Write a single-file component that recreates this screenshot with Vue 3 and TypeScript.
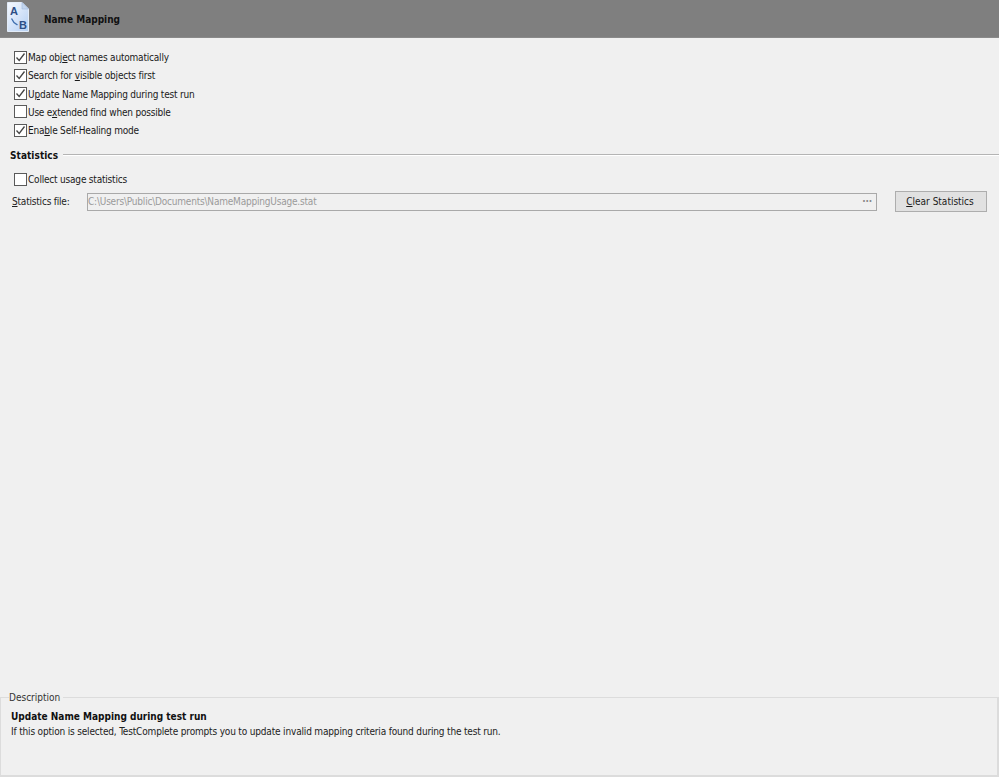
<script setup lang="ts">
interface Option { before: string; key: string; after: string; checked: boolean }
const options: Option[] = [
  { before: 'Map obj', key: 'e', after: 'ct names automatically', checked: true },
  { before: 'Search for ', key: 'v', after: 'isible objects first', checked: true },
  { before: 'U', key: 'p', after: 'date Name Mapping during test run', checked: true },
  { before: 'Use e', key: 'x', after: 'tended find when possible', checked: false },
  { before: 'Ena', key: 'b', after: 'le Self-Healing mode', checked: true },
]
</script>

<template>
  <div class="page">
    <header class="head">
      <svg class="logo" width="24" height="32" viewBox="0 0 24 32">
        <defs>
          <linearGradient id="pg" x1="0" y1="0" x2="1" y2="1">
            <stop offset="0" stop-color="#f6f9ff" />
            <stop offset="1" stop-color="#b4cff3" />
          </linearGradient>
        </defs>
        <path d="M1.5 1.5H16L22.5 8V30.5H1.5Z" fill="url(#pg)" stroke="#e3ecf8" />
        <path d="M16 1.5V8H22.5Z" fill="#c3d6ef" stroke="#9db9de" stroke-width="0.6" />
        <path d="M5.5 17.5L8 21.5L11.5 24" fill="none" stroke="#3f6fae" stroke-width="1.4" />
        <text x="4" y="14" class="logo-t">A</text>
        <text x="13" y="28" class="logo-t">B</text>
      </svg>
      <span class="title">Name Mapping</span>
    </header>

    <section class="options">
      <div v-for="o in options" :key="o.before" class="check-row">
        <span class="box">
          <svg v-if="o.checked" width="11" height="11" viewBox="0 0 11 11">
            <path d="M1.5 5.5L4.2 8.5L9.5 1.5" fill="none" stroke="#444" stroke-width="1.3" />
          </svg>
        </span>
        <span class="label">{{ o.before }}<u>{{ o.key }}</u>{{ o.after }}</span>
      </div>
    </section>

    <div class="group">
      <span class="group-title">Statistics</span>
      <span class="group-line"></span>
    </div>

    <div class="check-row collect">
      <span class="box"></span>
      <span class="label">Collect usa<u>g</u>e statistics</span>
    </div>

    <div class="file-row">
      <span class="file-label"><u>S</u>tatistics file:</span>
      <div class="file-input">
        <span>C:\Users\Public\Documents\NameMappingUsage.stat</span>
        <span class="dots">···</span>
      </div>
      <button class="btn" type="button"><u>C</u>lear Statistics</button>
    </div>

    <div class="spacer"></div>

    <fieldset class="desc">
      <legend>Description</legend>
      <div class="desc-title">Update Name Mapping during test run</div>
      <div class="desc-text">If this option is selected, TestComplete prompts you to update invalid mapping criteria found during the test run.</div>
    </fieldset>
  </div>
</template>

<style>
html, body { margin: 0; background: #f0f0f0; }
</style>

<style scoped>
.page {
  width: 999px;
  height: 777px;
  display: flex;
  flex-direction: column;
  background: #f0f0f0;
  color: #1a1a1a;
  font-family: "DejaVu Sans", sans-serif;
  font-stretch: condensed;
  font-size: 10px;
  letter-spacing: -0.2px;
  line-height: 14px;
  overflow: hidden;
}
.head {
  height: 38px;
  flex: none;
  background: #7f7f7f;
  display: flex;
  align-items: center;
  gap: 14px;
  padding-left: 6px;
  box-sizing: border-box;
  border-bottom: 1px solid #8a8a8a;
}
.logo { margin-top: -4px; }
.logo-t { font: bold 11px "Liberation Sans", sans-serif; letter-spacing: 0; fill: #2d4f86; }
.title { font-weight: 700; color: #111; letter-spacing: 0; padding-top: 2px; }
.options {
  padding: 12px 0 0 14px;
  display: flex;
  flex-direction: column;
  gap: 4.25px;
}
.check-row { display: flex; align-items: center; height: 14px; }
.label { padding-top: 2px; }
.box {
  width: 11px;
  height: 11px;
  flex: none;
  border: 1px solid #5a5a5a;
  background: #fff;
  margin-right: 1px;
  display: flex;
}
.group {
  display: flex;
  align-items: center;
  margin: 11px 0 0 10px;
  gap: 5px;
  height: 14px;
}
.group-title { font-weight: 700; color: #111; letter-spacing: 0.05px; padding-top: 2px; }
.group-line {
  flex: 1;
  height: 1px;
  background: #b4b4b4;
  border-bottom: 1px solid #fff;
}
.collect { margin: 10px 0 0 14px; }
.file-row {
  display: flex;
  align-items: center;
  margin-top: 5px;
  padding-left: 12px;
  height: 21px;
}
.file-label { width: 75px; flex: none; color: #222; }
.file-input {
  width: 790px;
  height: 18px;
  margin-top: 1px;
  box-sizing: border-box;
  border: 1px solid #a9a9a9;
  background: #f0f0f0;
  color: #9a9a9a;
  display: flex;
  align-items: center;
  justify-content: space-between;
  padding: 0 4px 0 0;
  flex: none;
}
.dots { color: #8a8a8a; font-weight: 700; }
.btn {
  margin-left: 18px;
  width: 92px;
  height: 21px;
  flex: none;
  padding: 0 2px 0 0;
  border: 1px solid #adadad;
  background: #e1e1e1;
  color: #1a1a1a;
  font: inherit;
  letter-spacing: 0;
}
.spacer { flex: 1; }
.desc {
  margin: 0;
  padding: 5px 10px 0;
  height: 88px;
  box-sizing: border-box;
  border: 1px solid #dcdcdc;
  border-width: 1px 2px 2px 1px;
  min-width: 0;
}
.desc legend { padding: 2px 3px 0 0; margin-left: -2px; color: #333; letter-spacing: 0; }
.desc-title { font-weight: 700; color: #111; letter-spacing: 0; }
.desc-text { margin-top: 1px; color: #222; letter-spacing: -0.17px; }
</style>
